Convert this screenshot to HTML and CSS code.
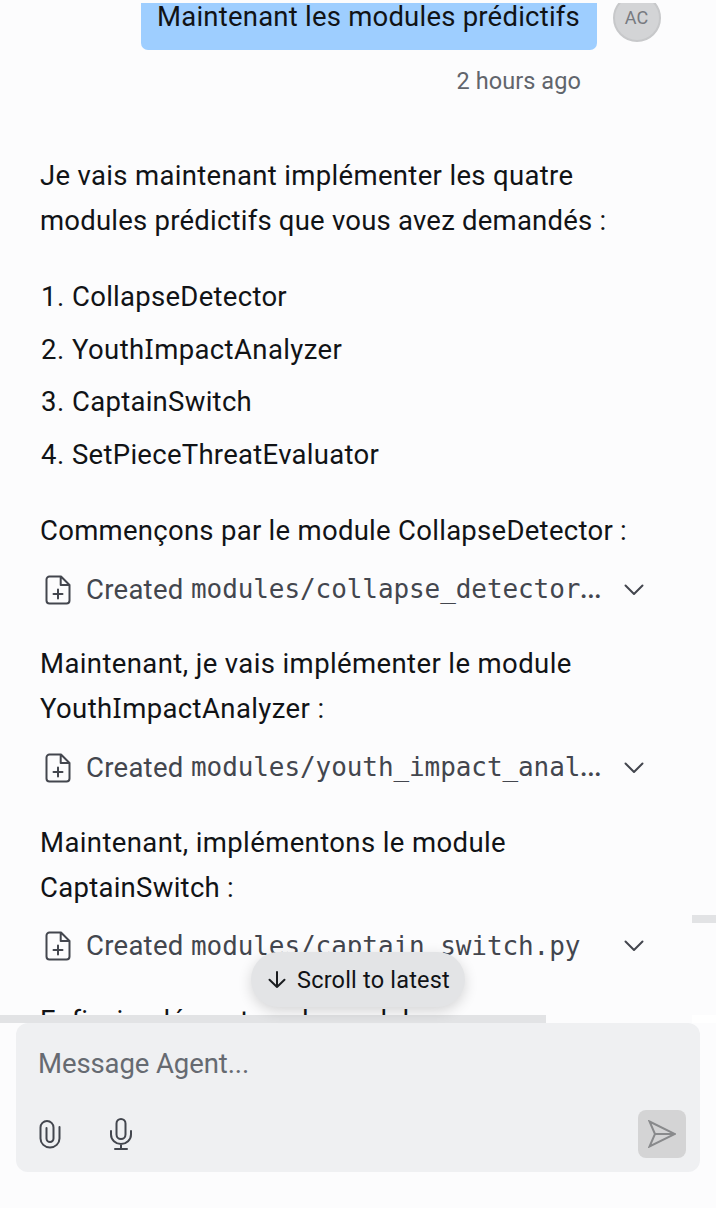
FILE: index.html
```html
<!DOCTYPE html>
<html lang="fr">
<head>
<meta charset="utf-8">
<title>Agent</title>
<link rel="stylesheet" href="styles.css">
</head>
<body>
<svg class="defs" width="0" height="0">
  <symbol id="file-plus" viewBox="0 0 26 30"><path d="M4 1.500h12L24.500 10v15.500a3 3 0 0 1-3 3h-17a3 3 0 0 1-3-3v-21a3 3 0 0 1 3-3zM15.700 1.800V10h8.500M13 14.500v9M8.500 19h9"/></symbol>
  <symbol id="chevron" viewBox="0 0 20 12"><path d="M1.500 1.500 10 10l8.500-8.500"/></symbol>
</svg>
<main class="thread">
  <div class="user-row">
    <div class="bubble"><span class="snug">Maintenant les modules prédictifs</span></div>
    <div class="avatar">AC</div>
  </div>
  <div class="time">2 hours ago</div>
  <p class="first"><span class="medium">Je vais maintenant implémenter les quatre</span><br><span class="snug">modules prédictifs que vous avez demandés :</span></p>
  <ol class="list">
    <li><b>1.</b><span>CollapseDetector</span></li>
    <li><b>2.</b><span class="loose">Youth<span class="slab">I</span>mpactAnalyzer</span></li>
    <li><b>3.</b><span>CaptainSwitch</span></li>
    <li><b>4.</b><span>SetPieceThreatEvaluator</span></li>
  </ol>
  <p>Commençons par le module CollapseDetector :</p>
  <div class="tool"><svg class="file"><use href="#file-plus"/></svg><span class="created">Created</span><code>modules/collapse_detector<i>…</i></code><svg class="chev"><use href="#chevron"/></svg></div>
  <p class="loose">Maintenant, je vais implémenter le module<br>Youth<span class="slab">I</span>mpactAnalyzer :</p>
  <div class="tool"><svg class="file"><use href="#file-plus"/></svg><span class="created">Created</span><code>modules/youth_impact_anal<i>…</i></code><svg class="chev"><use href="#chevron"/></svg></div>
  <p><span class="loose">Maintenant, implémentons le module</span><br>CaptainSwitch :</p>
  <div class="tool"><svg class="file"><use href="#file-plus"/></svg><span class="created">Created</span><code>modules/captain_switch.py</code><svg class="chev"><use href="#chevron"/></svg></div>
  <p>Enfin, implémentons le module</p>
</main>
<div class="scrollbar"><div class="thumb"></div><div class="corner"></div></div>
<form class="composer">
  <div class="placeholder">Message Agent...</div>
  <div class="actions">
    <svg class="clip" viewBox="0 0 22 29"><path d="M7.500 7.500v11a3.500 3.500 0 0 0 7 0V7.500a6.500 6.500 0 0 0-13 0v11a9.500 9 0 0 0 19 0V7" class="hidden-loop"/><path d="M7.500 8v10.500a3.500 3.500 0 0 0 7 0V7.500a6.500 6.500 0 0 0-13 0v11a9.500 9 0 0 0 19 0V7"/></svg>
    <svg class="mic" viewBox="0 0 22 32"><rect x="6.500" y="1" width="9" height="20" rx="4.500"/><path d="M1 13v3.500a10 9.500 0 0 0 20 0V13M11 26v5M5 31h12"/></svg>
    <button class="send" type="button"><svg viewBox="0 0 28 28"><path d="M1.500 1.500 27 14 1.500 26.500 7 14zM7 14h20"/></svg></button>
  </div>
</form>
<div class="latest"><svg viewBox="0 0 18 18"><path d="M9 1v15M1.500 8.800 9 16l7.500-7.200"/></svg><span>Scroll to latest</span></div>
<div class="side-thumb"></div>
</body>
</html>
```
FILE: styles.css
```css
* { box-sizing: border-box; }
body {
  margin: 0; padding-top: 3px; width: 716px; height: 1208px; overflow: hidden; position: relative;
  display: flex; flex-direction: column; background: #fcfcfd; color: #111316;
  font: 27.5px/44.8px Roboto, "Open Sans", sans-serif; letter-spacing: .28px; white-space: nowrap;
}
svg { fill: none; stroke: #43464e; stroke-width: 2; stroke-linecap: round; stroke-linejoin: round; flex: none; }
.snug { letter-spacing: .22px; }
.medium { letter-spacing: .33px; }
.loose { letter-spacing: .39px; }
.slab { font-family: "Noto Sans", sans-serif; font-size: 27px; line-height: 1; }
.defs { position: absolute; }
.hidden-loop { display: none; }
.thread { height: 1012px; overflow: hidden; padding: 0 55px 0 40px; }
.user-row { display: flex; justify-content: flex-end; gap: 15.5px; height: 47px; padding-right: .5px; }
.bubble { width: 456px; height: 47px; padding-left: 16px; background: #9eceff; border-radius: 0 0 7px 7px; line-height: 28px; }
.avatar { width: 48px; height: 48px; margin-top: -9px; border: 2px solid #c7c8ca; border-radius: 50%; background: #d3d4d6; color: #777a80; font-size: 18px; line-height: 44px; text-align: center; letter-spacing: 0; }
.time { height: 60px; margin-right: 80px; line-height: 62px; text-align: right; font-size: 23.5px; color: #61656c; letter-spacing: .08px; }
p { margin: 0; }
.first { margin-top: 44.2px; }
.list { margin: 31.2px 0; padding: 0; list-style: none; display: flex; flex-direction: column; gap: 7.8px; }
.list li { display: flex; }
.list b { width: 31px; padding-left: 1px; margin-right: 1px; font-weight: 400; letter-spacing: .6px; }
.tool { display: flex; align-items: center; height: 72px; margin-bottom: 16.8px; padding-left: 5px; color: #43464e; }
.file { width: 26px; height: 30px; }
.created { width: 105px; margin-left: 15px; padding-top: 1px; }
code { width: 433px; margin-top: -1px; font: 26px/44px "DejaVu Sans Mono", monospace; letter-spacing: -.08px; }
code i { font: 34px/1 Roboto, sans-serif; margin-left: -1px; }
.chev { width: 20px; height: 12px; }
.scrollbar { display: flex; justify-content: space-between; height: 8px; }
.thumb { width: 546px; background: #e2e3e5; }
.corner { width: 24px; background: #fff; }
.composer { height: 149px; margin: 0 16px; padding: 19px 14px 14px 22px; border-radius: 12px; background: #eff0f2; display: flex; flex-direction: column; justify-content: space-between; }
.placeholder { color: #666a71; letter-spacing: -.1px; }
.actions { display: flex; align-items: center; height: 48px; }
.clip { width: 22px; height: 29px; margin-left: 1px; }
.mic { width: 22px; height: 32px; margin-left: 49px; }
.send { display: flex; align-items: center; justify-content: center; width: 48px; height: 48px; margin-left: auto; padding: 0; border: 0; border-radius: 8px; background: #d4d4d5; }
.send svg { width: 28px; height: 28px; stroke: #898a8c; stroke-linejoin: miter; }
.latest { position: absolute; left: 251px; top: 952px; width: 214px; height: 55px; padding-left: 17px; display: flex; align-items: center; gap: 11px; border-radius: 28px; background: #e3e4e6; box-shadow: 0 4px 14px rgba(0,0,0,.16); font-size: 23.5px; letter-spacing: .2px; }
.latest span { padding-top: 2px; }
.latest svg { width: 18px; height: 18px; stroke: #1b1d20; }
.side-thumb { position: absolute; left: 692px; top: 915px; width: 24px; height: 8px; background: #e2e3e5; }
```
